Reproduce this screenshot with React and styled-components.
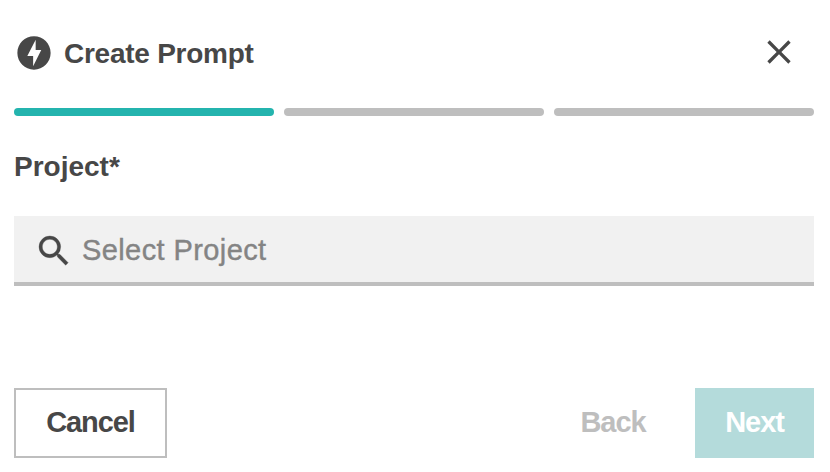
import React from 'react';
import styled, { createGlobalStyle } from 'styled-components';
import { MdSearch, MdClose } from 'react-icons/md';

const STEPS = ['project', 'details', 'review'];

const BoltIcon = () => (
    <svg width="40" height="40" viewBox="0 0 24 24" fill="currentColor">
        <path d="M12 2.02c-5.51 0-9.98 4.47-9.98 9.98s4.47 9.98 9.98 9.98 9.98-4.47 9.98-9.98S17.51 2.02 12 2.02zM11.48 20v-6.26H8L13 4v6.26h3.35L11.48 20z" />
    </svg>
)

export default function App() {
    return(
        <>
            <GlobalStyle />
            <Dialog>
                <Header>
                    <BoltIcon />
                    <Title>Create Prompt</Title>
                    <CloseButton aria-label="Close">
                        <MdClose size={40} />
                    </CloseButton>
                </Header>
                <Progress>
                    {STEPS.map((step, index) => (
                        <ProgressStep key={step} $active={index === 0} />
                    ))}
                </Progress>
                <FieldLabel htmlFor="project">Project*</FieldLabel>
                <SearchField>
                    <SearchIcon size={40} />
                    <SearchInput id="project" type="text" placeholder="Select Project" />
                </SearchField>
                <Footer>
                    <CancelButton>Cancel</CancelButton>
                    <BackButton disabled>Back</BackButton>
                    <NextButton disabled>Next</NextButton>
                </Footer>
            </Dialog>
        </>
    )
}

const GlobalStyle = createGlobalStyle`
    * {
        box-sizing: border-box;
    }

    body {
        margin: 0;
        background-color: #ffffff;
        color: #474747;
        font-family: 'Liberation Sans', Arial, sans-serif;
        font-size: 28px;
    }

    svg {
        display: block;
        flex-shrink: 0;
    }
`

const Dialog = styled.div`
    display: flex;
    flex-direction: column;
    height: 472px;
    padding: 32px 16px 14px 14px;
`

const Header = styled.header`
    display: flex;
    align-items: center;
    height: 42px;
`

const Title = styled.h1`
    margin: 0 0 0 10px;
    padding-top: 2px;
    font-size: 28px;
    line-height: 40px;
    font-weight: 700;
    letter-spacing: -0.25px;
`

const CloseButton = styled.button`
    align-self: flex-start;
    margin: 0 15px 0 auto;
    padding: 0;
    border: 0;
    background: none;
    color: inherit;
`

const Progress = styled.div`
    display: grid;
    grid-template-columns: repeat(3, 1fr);
    gap: 10px;
    margin-top: 34px;
`

const ProgressStep = styled.div`
    height: 8px;
    border-radius: 4px;
    background-color: ${props => props.$active ? '#24b4ae' : '#bebebe'};
`

const FieldLabel = styled.label`
    margin-top: 31px;
    font-weight: 700;
    line-height: 40px;
`

const SearchField = styled.div`
    display: flex;
    align-items: center;
    height: 70px;
    margin-top: 29px;
    padding: 3px 20px 0;
    border-bottom: 4px solid #bebebe;
    background-color: #f1f1f1;
`

const SearchIcon = styled(MdSearch)`
    path:last-child {
        stroke: currentColor;
        stroke-width: 0.2px;
    }

    path[fill='none'] {
        stroke: none;
    }
`

const SearchInput = styled.input`
    flex: 1;
    height: 40px;
    margin-left: 8px;
    padding: 0;
    border: 0;
    outline: 0;
    background: none;
    color: #474747;
    font-family: inherit;
    font-size: 29px;
    letter-spacing: 0.4px;

    &::placeholder {
        color: #848484;
        -webkit-text-stroke: 0.4px #848484;
        opacity: 1;
    }
`

const Footer = styled.footer`
    display: flex;
    margin-top: auto;
`

const Button = styled.button`
    height: 70px;
    padding: 0 0 2px;
    border: 0;
    background: none;
    font-family: inherit;
    font-size: 29px;
    font-weight: 700;
    letter-spacing: -1.1px;
`

const CancelButton = styled(Button)`
    width: 153px;
    border: 2px solid #bebebe;
    color: #474747;
`

const BackButton = styled(Button)`
    width: 124px;
    margin-left: auto;
    margin-right: 20px;
    color: #bebebe;
`

const NextButton = styled(Button)`
    width: 119px;
    background-color: #b4dbdb;
    color: #ffffff;
`
